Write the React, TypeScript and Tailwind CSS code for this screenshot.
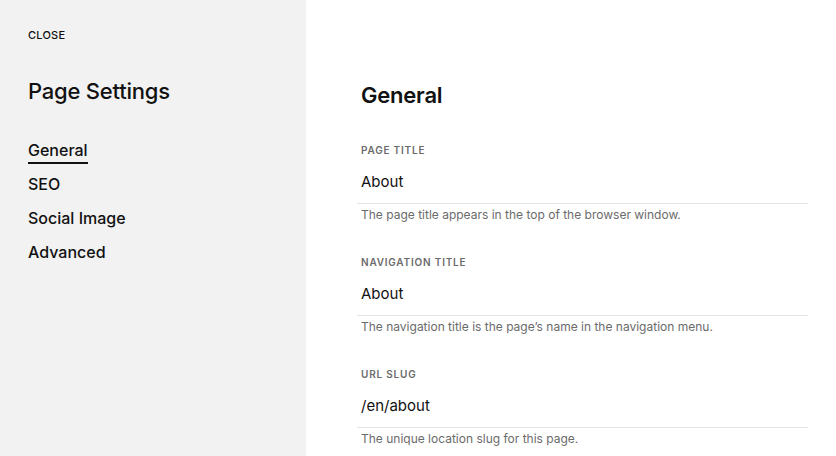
const font = { fontFamily: "Inter, 'Liberation Sans', sans-serif" };

const navItems = ["General", "SEO", "Social Image", "Advanced"];

const fields = [
  {
    label: "PAGE TITLE",
    value: "About",
    help: "The page title appears in the top of the browser window.",
  },
  {
    label: "NAVIGATION TITLE",
    value: "About",
    help: "The navigation title is the page’s name in the navigation menu.",
  },
  {
    label: "URL SLUG",
    value: "/en/about",
    help: "The unique location slug for this page.",
  },
];

export default function App() {
  return (
    <div className="flex h-[456px] w-[836px] overflow-hidden bg-white text-[#111]" style={font}>
      {/* Sidebar */}
      <aside className="flex w-[306px] shrink-0 flex-col bg-[#f2f2f2] pl-[28px] pt-[28px]">
        <button className="self-start text-[11px] font-medium leading-[14px] tracking-[0.02em] text-[#111]">
          CLOSE
        </button>
        <h1 className="mt-[35px] text-[22px] font-medium leading-[28px] tracking-[-0.01em]">
          Page Settings
        </h1>
        <nav className="mt-[33px] flex flex-col gap-[10px]">
          {navItems.map((item, i) => (
            <a key={item} className="self-start text-[16px] font-medium leading-[24px]">
              <span className={i === 0 ? "border-b-2 border-[#111] pb-[2px]" : ""}>{item}</span>
            </a>
          ))}
        </nav>
      </aside>

      {/* Content */}
      <main className="flex-1 pl-[51px] pr-[28px] pt-[80px]">
        <h2 className="pl-1 text-[22px] font-semibold leading-[30px] tracking-[-0.01em]">General</h2>
        <div className="mt-[33px] flex flex-col gap-[32px]">
          {fields.map((f) => (
            <div key={f.label}>
              <div className="pl-1 text-[10px] font-semibold leading-[14px] tracking-[0.08em] text-[#6b6b6b]">
                {f.label}
              </div>
              <div className="mt-[15px] border-b border-[#e3e3e3] pb-[11px] pl-1 text-[15px] leading-[20px]">
                {f.value}
              </div>
              <div className="mt-[3px] pl-1 text-[12px] leading-[16px] text-[#6b6b6b]">{f.help}</div>
            </div>
          ))}
        </div>
      </main>
    </div>
  );
}
